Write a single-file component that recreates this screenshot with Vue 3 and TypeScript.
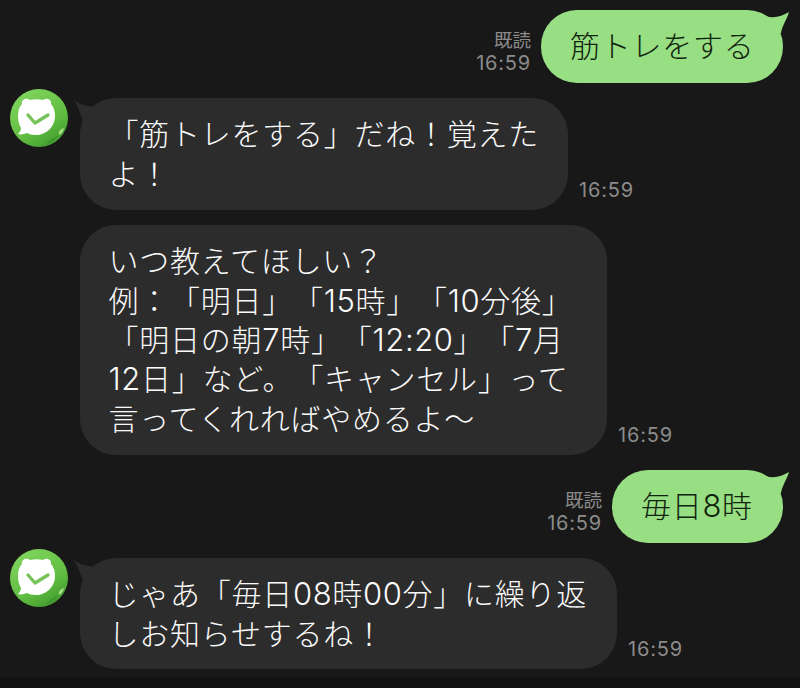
<script setup lang="ts">
interface Msg {
  side: 'me' | 'bot'
  lines: string[]
  width: number
  avatar?: boolean
}
const raw: Msg[] = [
  { side: 'me', width: 242, lines: ['筋トレをする'] },
  { side: 'bot', width: 488, avatar: true, lines: ['「筋トレをする」だね！覚えた', 'よ！'] },
  {
    side: 'bot',
    width: 527,
    lines: [
      'いつ教えてほしい？',
      '例：「明日」「15時」「10分後」',
      '「明日の朝7時」「12:20」「7月',
      '12日」など。「キャンセル」って',
      '言ってくれればやめるよ〜',
    ],
  },
  { side: 'me', width: 171, lines: ['毎日8時'] },
  { side: 'bot', width: 537, avatar: true, lines: ['じゃあ「毎日08時00分」に繰り返', 'しお知らせするね！'] },
]
const messages = raw.map((m) => ({
  ...m,
  rows: m.lines.map((l) =>
    l.split(/(\d[\d:]*)/).filter(Boolean).map((text) => ({ text, num: /^\d/.test(text) })),
  ),
}))
</script>

<template>
  <main class="chat">
    <div v-for="(m, i) in messages" :key="i" class="row" :class="m.side">
      <template v-if="m.side === 'me'">
        <div class="meta">
          <span>既読</span>
          <span class="time">16:59</span>
        </div>
        <div class="bubble green" :style="{ width: m.width + 'px' }">
          <svg class="tail tail-r" width="24" height="26" viewBox="0 0 24 26">
            <path d="M0 6 C8 9 16 6 23 2 C21 9 16 16 15 23 L2 24 Z" fill="#98de83" />
          </svg>
          <div v-for="(r, ri) in m.rows" :key="ri">
            <span v-for="(s, si) in r" :key="si" :class="{ num: s.num }">{{ s.text }}</span>
          </div>
        </div>
      </template>
      <template v-else>
        <div class="avatar-slot">
          <svg v-if="m.avatar" class="avatar" width="58" height="58" viewBox="0 0 58 58">
            <defs>
              <linearGradient :id="'ga' + i" x1="0.2" y1="0" x2="0.8" y2="1">
                <stop offset="0" stop-color="#82d65f" />
                <stop offset="0.65" stop-color="#5fbb3f" />
                <stop offset="1" stop-color="#3d962c" />
              </linearGradient>
            </defs>
            <circle cx="29" cy="29" r="29" :fill="'url(#ga' + i + ')'" />
            <path d="M48 46 C45 50 41 53 36 55 C40 51 44 50 48 46 Z" fill="#2f8a28" />
            <path d="M54 39 C53 43 51 45 49 46 C48 42 51 40 54 39 Z" fill="#a6e388" />
            <path
              d="M12 15 C11 11 16 8 20 11 C24 10 29 10 33 11 C37 8 42 11 41 15 C44 18 45 23 45 27
                 C45 38 36 46 26 46 C22 46 19 45 17 44 C14 45 11 46 8 45 C10 43 11 41 11 39
                 C9 36 8 32 8 27 C8 22 9 18 12 15 Z"
              fill="#fff"
            />
            <path d="M18 26 L25 34 L38 26" fill="none" stroke="#78c25c" stroke-width="3.4" stroke-linecap="round" stroke-linejoin="round" />
          </svg>
        </div>
        <div class="bubble dark" :style="{ width: m.width + 'px' }">
          <svg v-if="m.avatar" class="tail tail-l" width="24" height="26" viewBox="0 0 24 26">
            <path d="M1 2 C8 7 15 9 23 8 L23 24 L10 24 C8 16 5 9 1 2 Z" fill="#2c2c2c" />
          </svg>
          <div v-for="(r, ri) in m.rows" :key="ri">
            <span v-for="(s, si) in r" :key="si" :class="{ num: s.num }">{{ s.text }}</span>
          </div>
        </div>
        <span class="time side">16:59</span>
      </template>
    </div>
  </main>
</template>

<style scoped>
.chat {
  width: 800px;
  height: 688px;
  box-sizing: border-box;
  background: linear-gradient(to bottom, #181818 678px, #121212 678px);
  padding: 10px 17px 0 10px;
  display: flex;
  flex-direction: column;
  gap: 15px;
  overflow: hidden;
  font-family: "Noto Sans CJK JP", "Noto Sans", sans-serif;
}
.row {
  display: flex;
  align-items: flex-end;
}
.row.me {
  justify-content: flex-end;
}
.avatar-slot {
  width: 70px;
  flex: none;
  align-self: flex-start;
  height: 0;
}
.avatar {
  display: block;
  margin-top: -9px;
}
.bubble {
  position: relative;
  box-sizing: border-box;
  font-size: 30px;
  line-height: 39.4px;
  letter-spacing: 0.75px;
  white-space: nowrap;
  font-weight: 300;
  text-spacing-trim: space-all;
}
.num {
  font-family: Inter, "Liberation Sans", sans-serif;
  font-weight: 300;
  font-size: 31px;
  line-height: 1;
  letter-spacing: 0.6px;
}
.green {
  background: #98de83;
  color: #10240d;
  border-radius: 36px;
  padding: 15px 0 18.5px 29px;
}
.dark {
  background: #2c2c2c;
  color: #fafafa;
  border-radius: 36px;
  padding: 15.5px 28px 17.5px 28.5px;
}
.tail {
  position: absolute;
  display: block;
}
.tail-r {
  top: 0;
  right: -7px;
}
.tail-l {
  top: 0;
  left: -7px;
}
.meta {
  display: flex;
  flex-direction: column;
  align-items: flex-end;
  margin-right: 10px;
  margin-bottom: 8px;
  color: #8b8b8b;
  font-size: 18.5px;
  line-height: 24px;
}
.time {
  font-family: Inter, "Liberation Sans", sans-serif;
  font-size: 20px;
  letter-spacing: 0.8px;
  color: #8b8b8b;
}
.side {
  margin-left: 11px;
  margin-bottom: 8px;
  line-height: 24px;
}
</style>
